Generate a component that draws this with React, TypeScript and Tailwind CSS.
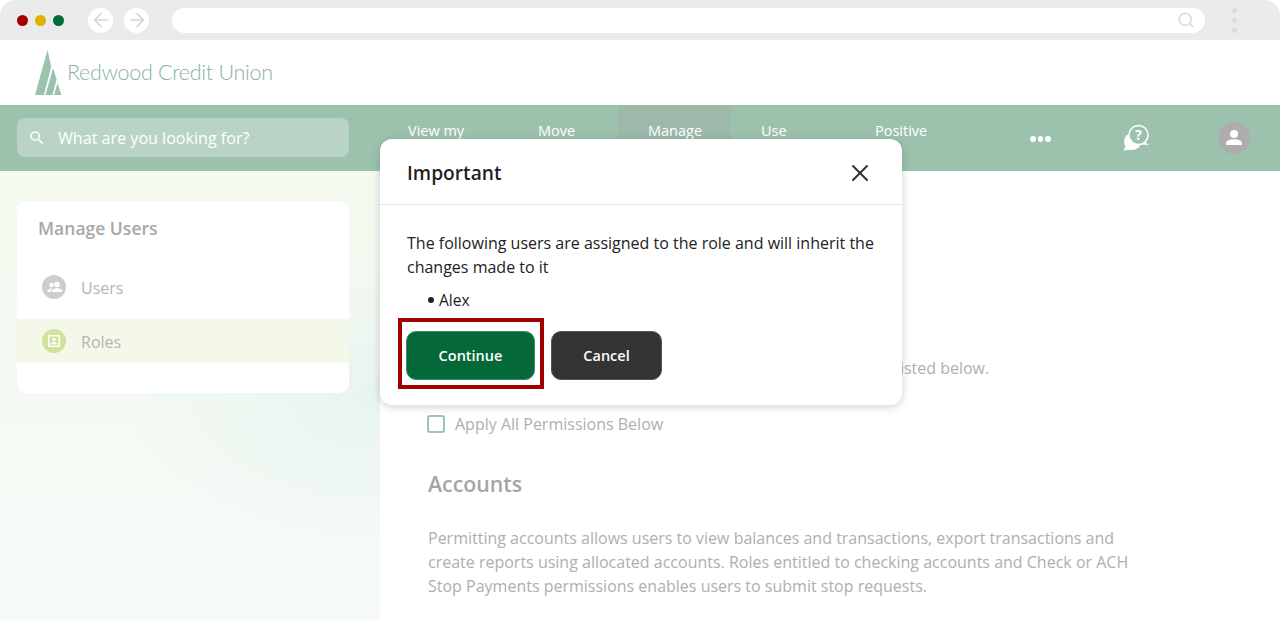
import { Search, ArrowLeft, ArrowRight, X } from 'lucide-react'
import { MdSearch } from 'react-icons/md'

const NAV = [
  { label: 'View my', width: 'w-[130px]', active: false },
  { label: 'Move', width: 'w-[110px]', active: false },
  { label: 'Manage', width: 'w-[113px]', active: true },
  { label: 'Use', width: 'w-[114px]', active: false },
  { label: 'Positive', width: 'w-[130px]', active: false },
]

function BrowserBar() {
  return (
    <div className="flex h-10 items-center rounded-t-[16px] bg-[#ebebeb] pl-[17px] pr-[43px]">
      <div className="flex gap-[7px]">
        <span className="size-[11px] rounded-full bg-[#a50000]" />
        <span className="size-[11px] rounded-full bg-[#e0b000]" />
        <span className="size-[11px] rounded-full bg-[#056a3a]" />
      </div>
      <div className="ml-[24px] flex gap-[11px]">
        <span className="flex size-[25px] items-center justify-center rounded-full bg-white">
          <ArrowLeft size={22} strokeWidth={1.7} className="text-[#d6d6d6]" />
        </span>
        <span className="flex size-[25px] items-center justify-center rounded-full bg-white">
          <ArrowRight size={22} strokeWidth={1.7} className="text-[#d6d6d6]" />
        </span>
      </div>
      <div className="ml-[23px] flex h-[25px] flex-1 items-center justify-end rounded-full bg-white pr-[10px]">
        <Search size={18} strokeWidth={2} className="text-[#d9d9d9]" />
      </div>
      <div className="ml-[27px] flex flex-col gap-[5px]">
        <span className="size-[5px] rounded-full bg-[#dcdcdc]" />
        <span className="size-[5px] rounded-full bg-[#dcdcdc]" />
        <span className="size-[5px] rounded-full bg-[#dcdcdc]" />
      </div>
    </div>
  )
}

function Logo() {
  return (
    <div className="flex h-[65px] items-center bg-white pl-[35px]">
      <svg width="27" height="45" viewBox="0 0 27 45" className="shrink-0">
        <path d="M12.5 0 L16.2 16.5 L9 45 L0 45 Z" fill="#9cc2ae" />
        <path d="M18.1 18 L21.6 29.5 L17.5 45 L10.5 45 Z" fill="#9cc2ae" />
        <path d="M22.6 33 L26.5 45 L19 45 Z" fill="#9cc2ae" />
      </svg>
      <span className="ml-[5px] whitespace-nowrap font-['Lato',sans-serif] text-[21.5px] font-light tracking-[-0.3px] text-[#86b59c]">
        Redwood Credit Union
      </span>
    </div>
  )
}

function HelpIcon() {
  return (
    <svg width="28" height="28" viewBox="0 0 28 28" fill="none">
      <circle cx="10.5" cy="18.5" r="8.5" fill="#fff" />
      <path d="M4 22 L1.5 27.5 L10 26.5 Z" fill="#fff" />
      <circle cx="16.5" cy="12" r="9.6" fill="#9cc2ae" stroke="#fff" strokeWidth="1.5" />
      <path d="M22.5 18.5 L27 22 L19.5 21.5 Z" fill="#fff" />
      <text x="16.5" y="17" textAnchor="middle" fontSize="14" fontWeight="700" fill="#fff" fontFamily="Open Sans, sans-serif">?</text>
    </svg>
  )
}

function NavBar() {
  return (
    <div className="flex h-[66px] bg-[#9cc2ae]">
      <div className="ml-[17px] mt-[13px] flex h-[39px] w-[332px] items-center rounded-[8px] bg-[#b9d4c6] pl-[11px] text-white">
        <MdSearch size={18} />
        <span className="ml-[12px] mt-[2px] text-[16.1px]">What are you looking for?</span>
      </div>
      <div className="ml-[29px] flex">
        {NAV.map((item) => (
          <div key={item.label} className={`${item.width} pl-[30px] pt-[16px] text-[14.5px] leading-5 text-white ${item.active ? 'bg-[#9cb9aa]' : ''}`}>
            {item.label}
          </div>
        ))}
      </div>
      <div className="ml-[55px] mt-[31px] flex h-[5px] gap-[2px]">
        <span className="size-[5.5px] rounded-full bg-white" />
        <span className="size-[5.5px] rounded-full bg-white" />
        <span className="size-[5.5px] rounded-full bg-white" />
      </div>
      <div className="ml-[71px] mt-[18px]">
        <HelpIcon />
      </div>
      <div className="ml-[68px] mt-[17px] flex size-8 items-center justify-center rounded-full bg-[#adadad]">
        <svg width="18" height="18" viewBox="0 0 18 18" fill="#fff">
          <circle cx="9" cy="5" r="4" />
          <path d="M1 16 V14.2 C1 11.5 5 10.2 9 10.2 C13 10.2 17 11.5 17 14.2 V16 Z" />
        </svg>
      </div>
    </div>
  )
}

function Sidebar() {
  return (
    <div className="h-full w-[380px] shrink-0 bg-[radial-gradient(ellipse_at_100%_50%,#e9f4ef_0%,rgba(233,244,239,0)_48%),linear-gradient(to_bottom,#f5faef_0%,#f4faf4_60%,#f6fbf8_100%)] pl-[17px] pt-[30px]">
      <div className="h-[192px] w-[332px] overflow-hidden rounded-[10px] bg-white">
        <div className="pl-[21px] pt-[15px] text-[17.5px] font-semibold leading-6 text-[#a8a8a8]">Manage Users</div>
        <div className="mt-[20px] flex h-[59px] items-center pb-[5px] pl-[25px]">
          <span className="flex size-6 items-center justify-center rounded-full bg-[#cdcdcd]">
            <svg width="15" height="15" viewBox="0 0 15 15" fill="#fff">
              <circle cx="4.5" cy="5" r="2.2" />
              <circle cx="10" cy="4.5" r="2.8" />
              <path d="M0.5 12 V10.8 C0.5 9.2 2.6 8.4 4.6 8.4 L5.4 8.5 C4.4 9.3 4 10.2 4 12 Z" />
              <path d="M5 12 V11 C5 9 8 8.2 10 8.2 C12 8.2 15 9 15 11 V12 Z" />
            </svg>
          </span>
          <span className="ml-[15px] mt-[1px] text-[16px] text-[#b5b5b5]">Users</span>
        </div>
        <div className="flex h-[44px] items-center bg-[#f3f8e9] pl-[25px]">
          <span className="flex size-6 items-center justify-center rounded-full bg-[#cfe39a]">
            <svg width="14" height="14" viewBox="0 0 14 14" fill="#fff">
              <path fillRule="evenodd" d="M1 1 H13 V13 H1 Z M2.5 2.5 V11.5 H11.5 V2.5 Z" />
              <circle cx="7" cy="5.5" r="1.8" />
              <path d="M3.8 10.3 C3.8 8.6 5.6 8.1 7 8.1 C8.4 8.1 10.2 8.6 10.2 10.3 Z" />
            </svg>
          </span>
          <span className="ml-[15px] mt-[1px] text-[16px] text-[#b5b5b5]">Roles</span>
        </div>
      </div>
    </div>
  )
}

function Main() {
  return (
    <div className="flex-1 overflow-hidden pl-[48px] text-[#b0aeae]">
      <p className="mt-[185px] h-6 whitespace-nowrap text-[16px] leading-6">
        Select which permissions to grant to this role from the options listed below.
      </p>
      <label className="mt-[32px] flex h-6 items-center">
        <span className="-ml-[1px] size-[18px] rounded-[3px] border-2 border-[#9cc5b0] bg-white" />
        <span className="ml-[10px] text-[16px]">Apply All Permissions Below</span>
      </label>
      <h2 className="mt-[32px] text-[21.3px] font-semibold leading-8 text-[#a5a5a5]">Accounts</h2>
      <p className="mt-[26px] w-[710px] text-[16px] leading-6">
        Permitting accounts allows users to view balances and transactions, export transactions and create reports using allocated accounts. Roles entitled to checking accounts and Check or ACH Stop Payments permissions enables users to submit stop requests.
      </p>
    </div>
  )
}

function ImportantModal() {
  return (
    <div className="absolute left-[380px] top-[139px] h-[266px] w-[522px] rounded-[12px] bg-white shadow-[0_2px_10px_rgba(0,0,0,0.18)]">
      <div className="flex h-[66px] items-center justify-between border-b border-[#e6e6e6] pl-[27px] pr-[28px]">
        <span className="mt-[3px] text-[19.2px] font-semibold text-[#1f1f1f]">Important</span>
        <X size={28} strokeWidth={1.7} className="mt-[2px] text-[#333]" />
      </div>
      <p className="ml-[27px] mt-[26px] w-[480px] text-[16px] leading-6 text-[#222]">
        The following users are assigned to the role and will inherit the changes made to it
      </p>
      <div className="ml-[48px] mt-[9px] flex items-center text-[15.5px] leading-6 text-[#222]">
        <span className="mr-[5px] size-[6px] rounded-full bg-[#222]" />
        Alex
      </div>
      <div className="ml-[26px] mt-[19px] flex gap-[16px]">
        <button className="h-[49px] w-[129px] rounded-[10px] border border-[#3d8a62] bg-[#056839] text-[14.5px] font-semibold text-white">Continue</button>
        <button className="h-[49px] w-[111px] rounded-[10px] border border-[#555] bg-[#333] text-[14.5px] font-semibold text-white">Cancel</button>
      </div>
      <div className="absolute left-[18px] top-[179px] h-[71px] w-[146px] border-[4px] border-[#a00000]" />
    </div>
  )
}

export default function App() {
  return (
    <div className="relative flex h-[620px] w-[1280px] flex-col overflow-hidden bg-white font-['Open_Sans',sans-serif]">
      <BrowserBar />
      <Logo />
      <NavBar />
      <div className="flex min-h-0 flex-1">
        <Sidebar />
        <Main />
      </div>
      <ImportantModal />
    </div>
  )
}
